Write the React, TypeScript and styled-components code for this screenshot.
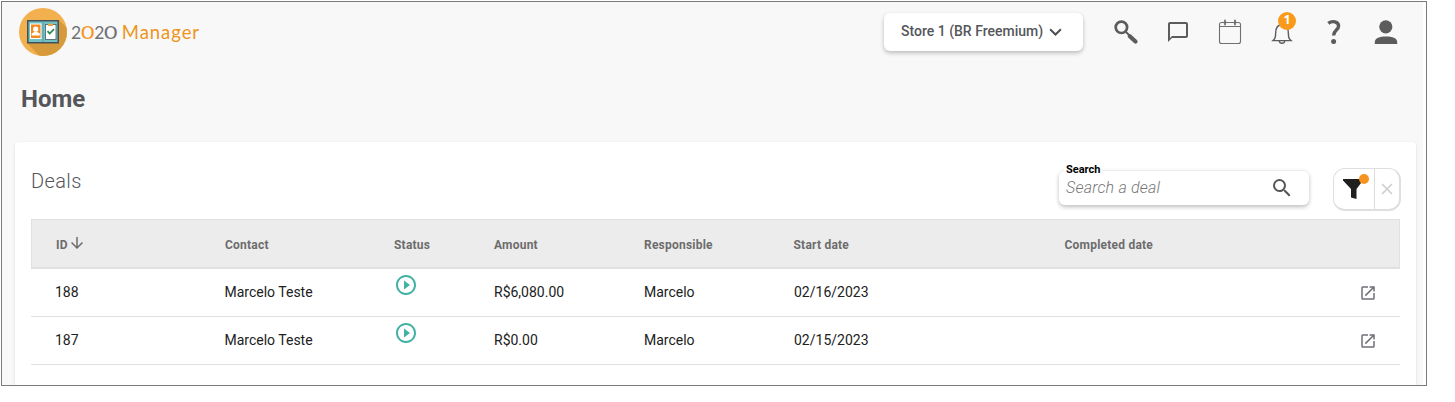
import React from "react";
import styled, { createGlobalStyle } from "styled-components";
import {
  MdArrowDownward,
  MdChatBubbleOutline,
  MdOpenInNew,
  MdPlayCircleOutline,
  MdSearch,
} from "react-icons/md";

const GlobalStyle = createGlobalStyle`
  * { box-sizing: border-box; }
  body {
    margin: 0;
    background: #fff;
    font-family: Roboto, "Liberation Sans", sans-serif;
    overflow: hidden;
  }
  button { font-family: inherit; border: 0; padding: 0; background: none; }
  svg { display: block; flex: none; }
`;

const Frame = styled.div`
  width: 1426px;
  height: 385px;
  margin: 1px 0 0 1px;
  padding-right: 3px;
  border: 1px solid #7b7b7b;
  overflow: hidden;
`;

const Page = styled.main`
  height: 100%;
  display: flex;
  flex-direction: column;
  background: #f8f8f8;
`;

const Header = styled.header`
  display: flex;
  align-items: center;
  height: 60px;
  padding: 0 24px 0 17px;
`;

const Brand = styled.div`
  display: flex;
  align-items: center;
  gap: 4px;
  margin-right: auto;
`;

const BrandText = styled.span`
  display: flex;
  align-items: baseline;
  margin-top: 1px;
  font-family: Lato, sans-serif;
  font-size: 17.5px;
  line-height: 24px;
  color: #6f7175;
`;

const Zero = styled.span<{ $accent?: boolean }>`
  display: inline-block;
  width: 13px;
  transform: scaleX(1.32);
  transform-origin: left;
  color: ${(p) => (p.$accent ? "#f7941d" : "inherit")};
`;

const Product = styled.span`
  margin-left: 4.5px;
  font-size: 18.5px;
  letter-spacing: 0.95px;
  color: #ee9420;
`;

const StoreButton = styled.button`
  display: flex;
  align-items: center;
  width: 199px;
  height: 38px;
  padding-left: 17px;
  padding-bottom: 2px;
  gap: 6px;
  border-radius: 6px;
  background: #fff;
  color: #54565a;
  font-size: 14px;
  font-weight: 500;
  box-shadow: 0 2px 4px rgba(0, 0, 0, 0.25);

  svg { margin-top: 2px; }
`;

const Actions = styled.nav`
  display: flex;
  align-items: center;
  gap: 26px;
  margin-left: 30px;
`;

const Action = styled.button`
  position: relative;
  display: flex;
  align-items: center;
  justify-content: center;
  width: 26px;
  height: 26px;
  color: #5c5c5c;
`;

const Badge = styled.span`
  position: absolute;
  left: 9px;
  top: -7px;
  width: 18px;
  height: 18px;
  border-radius: 50%;
  background: #f99a1d;
  color: #fff;
  font: 700 12.5px/16px "Open Sans", sans-serif;
  text-align: center;
`;

const Title = styled.h1`
  margin: 23px 0 0 19px;
  font-size: 24px;
  line-height: 28px;
  font-weight: 700;
  color: #54565a;
`;

const Card = styled.section`
  flex: 1;
  margin: 29px 7px 0 13px;
  padding: 26px 16px 0;
  border-radius: 4px 4px 0 0;
  background: #fff;
  box-shadow: 0 1px 3px rgba(0, 0, 0, 0.13);
`;

const CardHead = styled.div`
  display: flex;
  height: 51px;
`;

const CardTitle = styled.h2`
  margin: 1px auto 0 0;
  font-size: 20px;
  line-height: 24px;
  font-weight: 300;
  letter-spacing: 0.4px;
  color: #54565a;
`;

const SearchField = styled.label`
  position: relative;
  display: flex;
  align-items: center;
  justify-content: space-between;
  width: 250px;
  height: 35px;
  margin: 2px 24px 0 0;
  padding: 0 15px 1px 7px;
  border-top: 1px solid #eee;
  border-radius: 6px;
  box-shadow: 0 2px 4px rgba(0, 0, 0, 0.26);
  color: #54565a;
`;

const SearchLabel = styled.span`
  position: absolute;
  left: 5px;
  top: -8px;
  padding: 0 2px;
  background: #fff;
  color: #000;
  font-size: 11px;
  line-height: 13px;
  font-weight: 700;
`;

const Placeholder = styled.span`
  font-size: 16px;
  font-style: italic;
  font-weight: 300;
  letter-spacing: 0.2px;
  color: #777;
`;

const FilterGroup = styled.div`
  display: flex;
  width: 68px;
  height: 43px;
  margin-right: -1px;
  border: 1px solid #dfdfdf;
  border-right-width: 2px;
  border-bottom-width: 2px;
  border-radius: 12px;
`;

const FilterButton = styled.button<{ $width: number }>`
  position: relative;
  display: flex;
  align-items: center;
  justify-content: center;
  width: ${(p) => p.$width}px;
  padding-right: 2px;
  & + & { padding-right: 0; border-left: 1px solid #dcdcdc; }
`;

const Dot = styled.i`
  position: absolute;
  left: 25px;
  top: 5px;
  width: 10px;
  height: 10px;
  border-radius: 50%;
  background: #f7941d;
`;

const Row = styled.div`
  display: grid;
  grid-template-columns: 169.5px 169.5px 100px 150px 150px 270px 1fr;
  align-items: center;
  height: 48px;
  padding-left: 24px;
  border-bottom: 1px solid #e0e0e0;
  font-size: 14px;
  color: #212121;
`;

const HeadRow = styled(Row)`
  grid-template-columns: 169px 169px 100px 150px 149.5px 271px 1fr;
  height: 50px;
  padding-top: 2px;
  border: 1px solid #e1e1e1;
  border-bottom-width: 2px;
  background: #ececec;
  color: #6c6c6c;
  font-size: 12px;
  font-weight: 700;
  letter-spacing: 0.22px;
`;

const Cell = styled.span`
  display: flex;
  align-items: center;
  white-space: nowrap;
`;

const SortCell = styled(Cell)`
  svg { margin-top: -3px; }
`;

const TextCell = styled(Cell)`
  padding-bottom: 2px;
`;

const StatusCell = styled(Cell)`
  height: 48px;
  align-items: flex-start;
  padding-top: 4px;
  color: #3fb2a3;
`;

const LinkCell = styled(Cell)`
  justify-content: flex-end;
  padding-right: 23px;
  color: #716f78;
`;

const LogoMark = () => (
  <svg width="48" height="48" viewBox="0 0 48 48">
    <defs>
      <clipPath id="disc"><circle cx="24" cy="24" r="24" /></clipPath>
    </defs>
    <circle cx="24" cy="24" r="24" fill="#f2b04f" />
    <path clipPath="url(#disc)" d="M40 12 56 28V60H32L8 35Z" fill="#d69a3c" />
    <rect x="8" y="12" width="32" height="23.5" fill="#45505a" />
    <rect x="9.5" y="13.5" width="29" height="20.5" fill="#72c1c5" />
    <path d="M24 13.5v20.5" stroke="#549da5" />
    <rect x="11" y="15.5" width="11.5" height="15.5" fill="#fff" />
    <rect x="12" y="16.5" width="9.5" height="13.5" fill="#f18a20" />
    <circle cx="16.7" cy="21.2" r="2.6" fill="#fff" />
    <path d="M12.7 27.5v-2l2.7-1.6h2.7l2.7 1.6v2Z" fill="#fff" />
    <rect x="26.5" y="16.5" width="10.5" height="15" fill="#fff" stroke="#4c5c65" strokeWidth=".8" />
    <path d="M29 18v-2h1.5l1-1.2 1 1.2H34v2Z" fill="#e9a640" />
    <path d="m28.5 23.200 2.200 2.300 4.300-4.300" fill="none" stroke="#26864a" strokeWidth="1.7" />
  </svg>
);

const ChevronIcon = () => (
  <svg width="13" height="8" viewBox="0 0 13 8" fill="none" stroke="#4b4f57" strokeWidth="2">
    <path d="m1.100 1.300 5.400 5.200 5.400-5.200" />
  </svg>
);

const MagnifierIcon = () => (
  <svg width="26" height="26" viewBox="0 0 26 26" fill="none" stroke="currentColor">
    <circle cx="8.400" cy="8.300" r="5.700" strokeWidth="2.700" />
    <path d="m12.500 12.500 4 4" strokeWidth="2" />
    <path d="m16.800 17.200 5.700 5.300" strokeWidth="4.200" strokeLinecap="round" />
  </svg>
);

const CalendarIcon = () => (
  <svg width="26" height="26" viewBox="0 0 26 26" fill="none" stroke="#707070">
    <rect x="2.500" y="3.500" width="21" height="21" rx="2" strokeWidth="1.100" />
    <path d="M2.500 7.500h21" />
    <path d="M8 1.500v4M18 1.500v4" strokeWidth="1.800" strokeLinecap="round" />
    <path d="M6.500 3.500h3M16.500 3.500h3" strokeWidth="1.600" />
  </svg>
);

const BellIcon = () => (
  <svg width="26" height="26" viewBox="0 0 26 26" fill="none" stroke="currentColor" strokeWidth="1.4">
    <path d="M4 21.600C6.500 19.500 6.500 18 6.700 13.500 6.900 8.500 9 5.700 13 5.700s6.100 2.800 6.300 7.800c.2 4.500.2 6 2.700 8.100Z" />
    <path d="M10.300 22c.3 3 5.100 3 5.400 0" />
  </svg>
);

const QuestionIcon = () => (
  <svg width="26" height="26" viewBox="0 0 26 26" fill="none" stroke="currentColor">
    <path d="M7.300 4.400C11 1.400 17.600 2.300 17.600 7c0 4-5 4.200-5 9.500" strokeWidth="3.400" />
    <circle cx="12.600" cy="22.400" r="2.500" fill="currentColor" stroke="none" />
  </svg>
);

const PersonIcon = () => (
  <svg width="26" height="26" viewBox="0 0 26 26" fill="currentColor">
    <circle cx="12.800" cy="7.800" r="6.600" />
    <path d="M1.800 25v-2.200c0-3.600 5-5.400 11.200-5.400s11.200 1.800 11.200 5.400V25Z" />
  </svg>
);

const FunnelIcon = () => (
  <svg width="20" height="20" viewBox="0 0 20 20" fill="#1f1f1f">
    <path d="M0 0h20v1.500L13.500 10V20L8 18.500V10L0 1.500Z" />
  </svg>
);

const CrossIcon = () => (
  <svg width="12" height="12" viewBox="0 0 12 12" stroke="#cfcfcf" strokeWidth="1.700">
    <path d="m1 1 10 10M11 1 1 11" />
  </svg>
);

const deals = [
  { id: "188", contact: "Marcelo Teste", amount: "R$6,080.00", responsible: "Marcelo", start: "02/16/2023" },
  { id: "187", contact: "Marcelo Teste", amount: "R$0.00", responsible: "Marcelo", start: "02/15/2023" },
];

export default function App() {
  return (
    <>
      <GlobalStyle />
      <Frame>
        <Page>
          <Header>
            <Brand>
              <LogoMark />
              <BrandText>
                2<Zero $accent>0</Zero>2<Zero>0</Zero>
                <Product>Manager</Product>
              </BrandText>
            </Brand>
            <StoreButton>
              Store 1 (BR Freemium)
              <ChevronIcon />
            </StoreButton>
            <Actions>
              <Action><MagnifierIcon /></Action>
              <Action><MdChatBubbleOutline size={24} /></Action>
              <Action><CalendarIcon /></Action>
              <Action><BellIcon /><Badge>1</Badge></Action>
              <Action><QuestionIcon /></Action>
              <Action><PersonIcon /></Action>
            </Actions>
          </Header>
          <Title>Home</Title>
          <Card>
            <CardHead>
              <CardTitle>Deals</CardTitle>
              <SearchField>
                <SearchLabel>Search</SearchLabel>
                <Placeholder>Search a deal</Placeholder>
                <MdSearch size={24} />
              </SearchField>
              <FilterGroup>
                <FilterButton $width={40}><FunnelIcon /><Dot /></FilterButton>
                <FilterButton $width={25}><CrossIcon /></FilterButton>
              </FilterGroup>
            </CardHead>
            <HeadRow>
              <SortCell>ID<MdArrowDownward size={18} /></SortCell>
              <Cell>Contact</Cell>
              <Cell>Status</Cell>
              <Cell>Amount</Cell>
              <Cell>Responsible</Cell>
              <Cell>Start date</Cell>
              <Cell>Completed date</Cell>
            </HeadRow>
            {deals.map((d) => (
              <Row key={d.id}>
                <TextCell>{d.id}</TextCell>
                <TextCell>{d.contact}</TextCell>
                <StatusCell><MdPlayCircleOutline size={24} /></StatusCell>
                <TextCell>{d.amount}</TextCell>
                <TextCell>{d.responsible}</TextCell>
                <TextCell>{d.start}</TextCell>
                <LinkCell><MdOpenInNew size={18} /></LinkCell>
              </Row>
            ))}
          </Card>
        </Page>
      </Frame>
    </>
  );
}
